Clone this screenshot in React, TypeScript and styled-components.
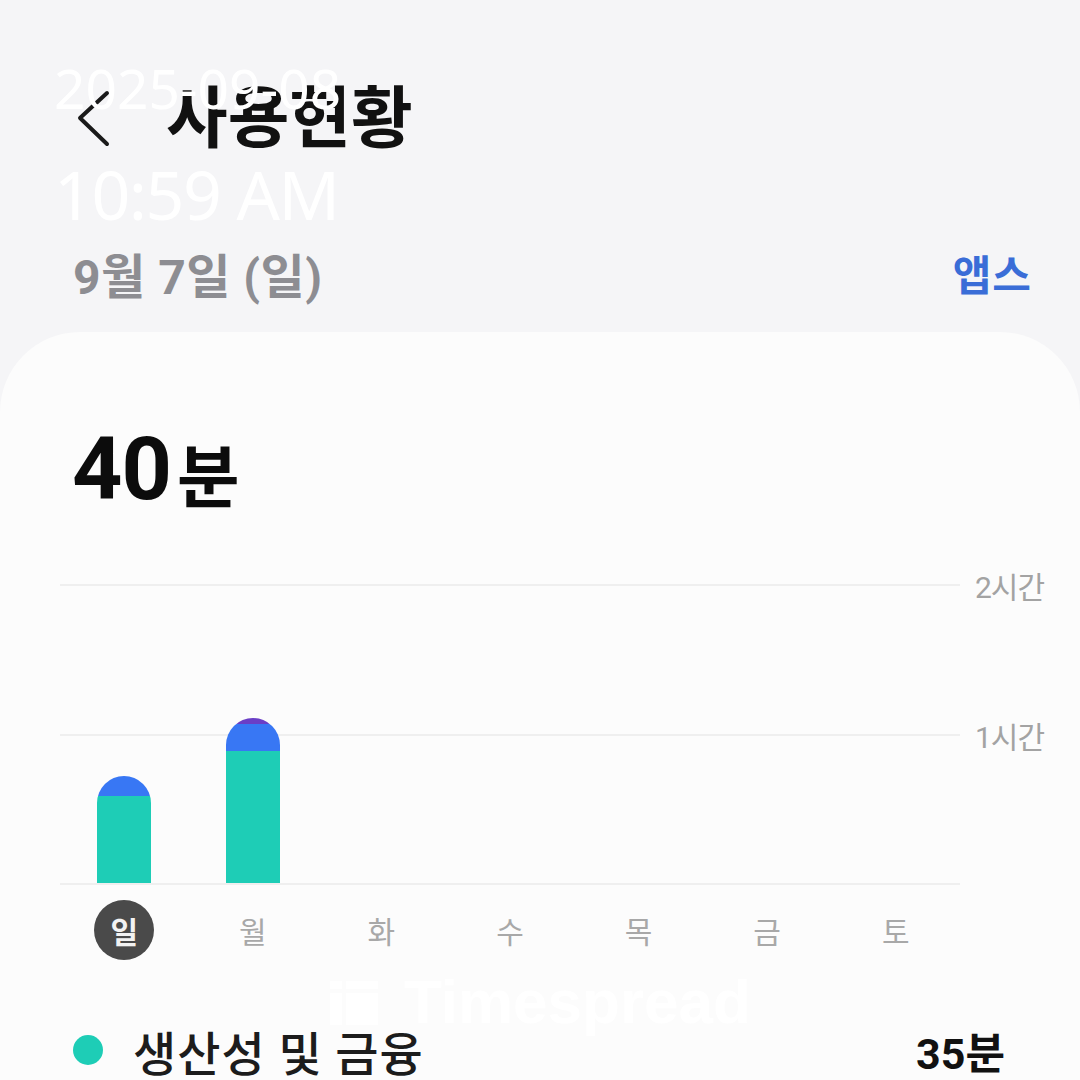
import React from "react";
import styled, { createGlobalStyle } from "styled-components";

const GlobalStyle = createGlobalStyle`
  html, body { margin: 0; padding: 0; background: #f5f5f7; }
  body { font-family: "Roboto", "Noto Sans CJK KR", sans-serif; }
`;

const KR = `"Roboto", "Noto Sans CJK KR", sans-serif`;

const Screen = styled.div`
  position: relative;
  width: 1080px;
  height: 1080px;
  overflow: hidden;
  background: #f5f5f7;
  display: flex;
  flex-direction: column;
  font-family: ${KR};
`;

const Header = styled.div`
  height: 120px;
  margin-top: 60px;
  display: flex;
  align-items: center;
  padding-left: 76px;
`;

const BackIcon = styled.svg`
  width: 36px;
  height: 60px;
  flex: none;
`;

const Title = styled.h1`
  margin: 0 0 0 54px;
  font-size: 67px;
  font-weight: 700;
  color: #111;
  line-height: 1;
`;

const DateRow = styled.div`
  height: 80px;
  margin-top: 55px;
  display: flex;
  align-items: center;
  justify-content: space-between;
  padding: 0 48px 0 73px;
`;

const DateText = styled.div`
  font-size: 48px;
  font-weight: 700;
  color: #8d8d92;
  letter-spacing: 0.5px;
`;

const AppsLink = styled.div`
  font-size: 42px;
  font-weight: 700;
  color: #3a6dd7;
  letter-spacing: 1px;
`;

const Card = styled.div`
  margin-top: 20px;
  flex: 1;
  background: #fcfcfc;
  border-radius: 80px 80px 0 0;
  padding: 0 0 0 60px;
  display: flex;
  flex-direction: column;
`;

const TotalRow = styled.div`
  height: 100px;
  margin-top: 86px;
  display: flex;
  align-items: center;
  padding-left: 12px;
  font-weight: 700;
  color: #0c0c0c;
`;

const TotalNumber = styled.span`
  font-size: 88px;
  letter-spacing: -1px;
`;

const TotalUnit = styled.span`
  font-size: 68px;
  margin-left: 6px;
  margin-top: 8px;
`;

const ChartArea = styled.div`
  margin-top: 66px;
  display: grid;
  grid-template-columns: 900px;
  width: 900px;
  height: 301px;
`;

const GridLayer = styled.div`
  grid-area: 1 / 1;
  display: flex;
  flex-direction: column;
  justify-content: space-between;
  min-width: 0;
`;

const GridRow = styled.div`
  height: 2px;
  display: flex;
  align-items: center;
`;

const GridLine = styled.div`
  flex: none;
  width: 900px;
  height: 2px;
  background: #efefef;
`;

const GridLabel = styled.div`
  flex: none;
  margin-left: 15px;
  font-size: 30px;
  color: #a3a3a3;
  white-space: nowrap;
  letter-spacing: -1px;
`;

const BarLayer = styled.div`
  grid-area: 1 / 1;
  display: grid;
  grid-template-columns: repeat(7, 1fr);
  align-items: end;
  padding-bottom: 2px;
  min-width: 0;
`;

const BarSlot = styled.div`
  display: flex;
  justify-content: center;
  align-items: flex-end;
`;

const Bar = styled.div`
  width: 54px;
  border-radius: 27px 27px 0 0;
  overflow: hidden;
  display: flex;
  flex-direction: column;
`;

const Segment = styled.div<{ $color: string }>`
  background: ${(p) => p.$color};
  flex: none;
`;

const DayRow = styled.div`
  margin-top: 15px;
  width: 900px;
  display: grid;
  grid-template-columns: repeat(7, 1fr);
`;

const DayCell = styled.div`
  height: 60px;
  display: flex;
  align-items: center;
  justify-content: center;
`;

const DayLabel = styled.div<{ $active?: boolean }>`
  width: 60px;
  height: 60px;
  border-radius: 50%;
  display: flex;
  align-items: center;
  justify-content: center;
  font-size: 30px;
  font-weight: ${(p) => (p.$active ? 700 : 400)};
  color: ${(p) => (p.$active ? "#f2f2f2" : "#a8a8a8")};
  background: ${(p) => (p.$active ? "#4a4a4a" : "transparent")};
`;

const LegendRow = styled.div`
  margin-top: 60px;
  height: 60px;
  display: flex;
  align-items: center;
  padding: 0 75px 0 13px;
`;

const Dot = styled.div<{ $color: string }>`
  width: 30px;
  height: 30px;
  border-radius: 50%;
  background: ${(p) => p.$color};
  flex: none;
`;

const LegendName = styled.div`
  margin-left: 30px;
  font-size: 47px;
  font-weight: 500;
  color: #1c1c1c;
  flex: 1;
  letter-spacing: 1px;
`;

const LegendValue = styled.div`
  font-size: 43px;
  font-weight: 700;
  color: #111;
`;

const Stamp = styled.div`
  position: absolute;
  left: 54px;
  top: 60px;
  display: flex;
  flex-direction: column;
  font-family: "Noto Sans", sans-serif;
  color: #ffffff;
  pointer-events: none;
`;

const StampDate = styled.div`
  font-size: 55px;
  line-height: 55px;
`;

const StampTime = styled.div`
  margin-top: 45px;
  font-size: 68px;
  line-height: 68px;
  letter-spacing: -1.5px;
`;

const Watermark = styled.div`
  position: absolute;
  left: 330px;
  top: 966px;
  display: flex;
  align-items: center;
  gap: 26px;
  color: #ffffff;
  font-family: "Liberation Sans", Arial, sans-serif;
  font-weight: 700;
  font-size: 62px;
  pointer-events: none;
`;

const WatermarkLogo = styled.svg`
  width: 48px;
  height: 46px;
  flex: none;
`;

const days = ["일", "월", "화", "수", "목", "금", "토"];

const bars: { segs: { c: string; h: number }[] }[] = [
  { segs: [{ c: "#3877f4", h: 20 }, { c: "#1ecdb6", h: 87 }] },
  { segs: [{ c: "#6a3ec6", h: 6 }, { c: "#3877f4", h: 27 }, { c: "#1ecdb6", h: 132 }] },
  { segs: [] },
  { segs: [] },
  { segs: [] },
  { segs: [] },
  { segs: [] },
];

export default function App() {
  return (
    <>
      <GlobalStyle />
      <Screen>
        <Header>
          <BackIcon viewBox="0 0 36 60">
            <path d="M31 4 L4 29 L31 55" fill="none" stroke="#1a1a1a" strokeWidth="4" strokeLinecap="round" strokeLinejoin="round" />
          </BackIcon>
          <Title>사용현황</Title>
        </Header>
        <DateRow>
          <DateText>9월 7일 (일)</DateText>
          <AppsLink>앱스</AppsLink>
        </DateRow>
        <Card>
          <TotalRow>
            <TotalNumber>40</TotalNumber>
            <TotalUnit>분</TotalUnit>
          </TotalRow>
          <ChartArea>
            <GridLayer>
              <GridRow>
                <GridLine />
                <GridLabel>2시간</GridLabel>
              </GridRow>
              <GridRow>
                <GridLine />
                <GridLabel>1시간</GridLabel>
              </GridRow>
              <GridRow>
                <GridLine />
              </GridRow>
            </GridLayer>
            <BarLayer>
              {bars.map((b, i) => (
                <BarSlot key={i}>
                  {b.segs.length > 0 && (
                    <Bar>
                      {b.segs.map((s, j) => (
                        <Segment key={j} $color={s.c} style={{ height: s.h }} />
                      ))}
                    </Bar>
                  )}
                </BarSlot>
              ))}
            </BarLayer>
          </ChartArea>
          <DayRow>
            {days.map((d, i) => (
              <DayCell key={d}>
                <DayLabel $active={i === 0}>{d}</DayLabel>
              </DayCell>
            ))}
          </DayRow>
          <LegendRow>
            <Dot $color="#1ecdb6" />
            <LegendName>생산성 및 금융</LegendName>
            <LegendValue>35분</LegendValue>
          </LegendRow>
        </Card>
        <Stamp>
          <StampDate>2025-09-08</StampDate>
          <StampTime>10:59 AM</StampTime>
        </Stamp>
        <Watermark>
          <WatermarkLogo viewBox="0 0 48 46">
            <rect x="0" y="2" width="12" height="8" fill="#fff" />
            <rect x="0" y="14" width="12" height="32" fill="#fff" />
            <rect x="16" y="2" width="32" height="8" fill="#fff" />
            <rect x="16" y="14" width="32" height="32" fill="#fff" />
          </WatermarkLogo>
          <span>Timespread</span>
        </Watermark>
      </Screen>
    </>
  );
}
